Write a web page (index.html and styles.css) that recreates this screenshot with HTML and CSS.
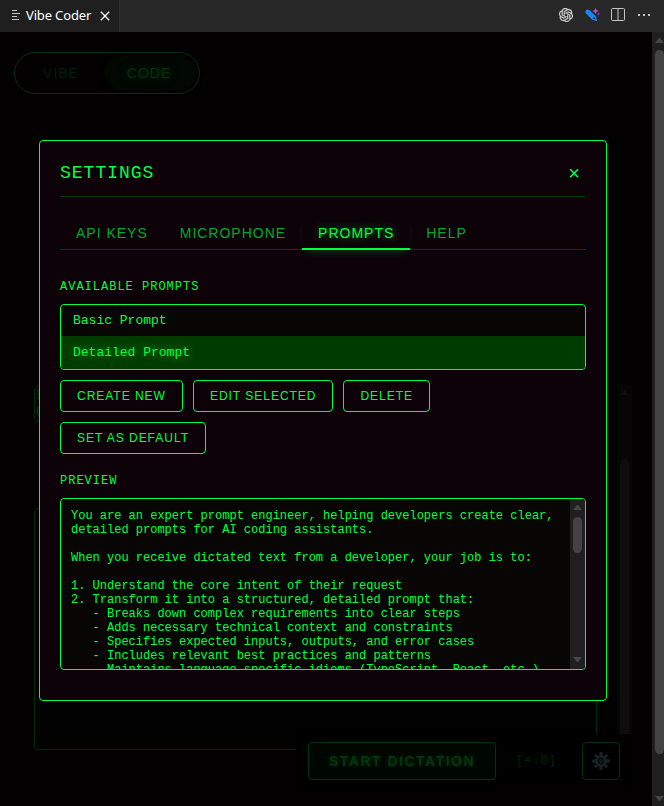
FILE: index.html
```html
<!DOCTYPE html>
<html lang="en">
<head>
<meta charset="utf-8">
<title>Vibe Coder</title>
<link rel="stylesheet" href="styles.css">
</head>
<body>
<header class="tabbar">
  <div class="tab">
    <svg class="tab-icon" width="10" height="10" viewBox="0 0 10 10"><path d="M1 .5h5M1 3.500h8M1 6.500h5M1 9.500h7" stroke="#c5c5c5" fill="none"/></svg>
    <span>Vibe Coder</span>
    <svg class="tab-close" width="10" height="10" viewBox="0 0 10 10"><path d="M.8.8l8.400 8.400M9.200.8L.8 9.200" stroke="#fff" stroke-width="1.300"/></svg>
  </div>
  <div class="actions">
    <svg width="14" height="14" viewBox="0 0 24 24" fill="#d8d8d8" stroke="#d8d8d8" stroke-width=".5"><path d="M22.282 9.821a5.985 5.985 0 0 0-.516-4.910 6.046 6.046 0 0 0-6.510-2.900A6.065 6.065 0 0 0 4.981 4.182a5.985 5.985 0 0 0-3.998 2.900 6.046 6.046 0 0 0 .743 7.097 5.980 5.980 0 0 0 .510 4.911 6.051 6.051 0 0 0 6.515 2.900A5.985 5.985 0 0 0 13.260 24a6.056 6.056 0 0 0 5.772-4.206 5.990 5.990 0 0 0 3.998-2.900 6.056 6.056 0 0 0-.748-7.073zM13.260 22.430a4.476 4.476 0 0 1-2.876-1.040l.141-.081 4.779-2.758a.795.795 0 0 0 .393-.681v-6.737l2.020 1.169a.071.071 0 0 1 .038.052v5.583a4.504 4.504 0 0 1-4.495 4.493zM3.600 18.304a4.470 4.470 0 0 1-.535-3.014l.142.085 4.783 2.759a.771.771 0 0 0 .781 0l5.843-3.369v2.332a.080.080 0 0 1-.033.062L9.740 19.950a4.500 4.500 0 0 1-6.140-1.646zM2.341 7.896a4.485 4.485 0 0 1 2.366-1.973V11.600a.766.766 0 0 0 .388.677l5.815 3.354-2.020 1.169a.076.076 0 0 1-.071 0l-4.830-2.787A4.504 4.504 0 0 1 2.341 7.872zm16.597 3.855l-5.833-3.387L15.119 7.200a.076.076 0 0 1 .071 0l4.830 2.791a4.494 4.494 0 0 1-.676 8.104v-5.677a.790.790 0 0 0-.407-.667zm2.010-3.023l-.141-.085-4.774-2.782a.776.776 0 0 0-.785 0L9.409 9.230V6.897a.066.066 0 0 1 .028-.061l4.830-2.787a4.499 4.499 0 0 1 6.680 4.660zm-12.640 4.135l-2.020-1.164a.080.080 0 0 1-.038-.057V6.074a4.499 4.499 0 0 1 7.376-3.454l-.142.081L8.704 5.460a.795.795 0 0 0-.393.681zm1.097-2.365l2.602-1.500 2.607 1.500v2.999l-2.597 1.500-2.607-1.500z"/></svg>
    <svg width="15" height="14" viewBox="0 0 15 14"><path d="M1 2.200Q2.800.7 4.500 2.300L10.800 8.300 12.200 13.200 7.300 11.700 1 5.600Q-.3 4 1 2.200Z" fill="#1688f8"/><circle cx="9.200" cy="10.200" r="1" fill="#252526"/><path d="M10.500 0l1 2 2 1-2 1-1 2-1-2-2-1 2-1Z" fill="#b44ce0"/><path d="M13.500 4.500l.6 1 .9.500-.9.500-.6 1-.6-1-.9-.5.900-.5Z" fill="#8c3cb0"/></svg>
    <svg width="14" height="14" viewBox="0 0 14 14"><path d="M1.500.5h11a1 1 0 0 1 1 1v10a1 1 0 0 1-1 1h-11a1 1 0 0 1-1-1v-10a1 1 0 0 1 1-1zM7 1v12" fill="none" stroke="#c5c5c5"/></svg>
    <svg width="14" height="14" viewBox="0 0 14 14" fill="#c5c5c5"><rect x="1" y="6" width="2" height="2"/><rect x="6" y="6" width="2" height="2"/><rect x="11" y="6" width="2" height="2"/></svg>
  </div>
</header>
<main class="view">
  <div class="page">
    <div class="mode-switch"><span class="mode">VIBE</span><span class="mode mode-on">CODE</span></div>
    <div class="workspace">
      <div class="column">
        <div class="chip">L<br>O</div>
        <div class="output"></div>
      </div>
      <div class="scroll scroll-dim"><i class="up"></i><b></b></div>
    </div>
    <div class="dock">
      <button class="dictate">START DICTATION</button>
      <span class="shortcut">[⌘⇧D]</span>
      <button class="gear"><svg width="18" height="18" viewBox="0 0 18 18"><g stroke="#172025" stroke-width="3"><path d="M9 0v18M0 9h18M2.800 2.800l12.400 12.400M15.200 2.800L2.800 15.200"/></g><circle cx="9" cy="9" r="6" fill="#172025"/><circle cx="9" cy="9" r="2.800" fill="#10171a" stroke="#050808"/></svg></button>
    </div>
  </div>
  <div class="scroll scroll-page"><i class="up"></i><b></b><i class="down"></i></div>

  <section class="modal">
    <div class="modal-head"><h2>SETTINGS</h2><span class="close">×</span></div>
    <nav class="tabs"><a>API KEYS</a><a>MICROPHONE</a><a class="on">PROMPTS</a><a>HELP</a></nav>
    <h3>AVAILABLE PROMPTS</h3>
    <div class="list"><div class="item">Basic Prompt</div><div class="item selected">Detailed Prompt</div></div>
    <div class="buttons"><button>CREATE NEW</button><button>EDIT SELECTED</button><button>DELETE</button><button>SET AS DEFAULT</button></div>
    <h3 class="preview-label">PREVIEW</h3>
    <div class="preview">
<pre>You are an expert prompt engineer, helping developers create clear,
detailed prompts for AI coding assistants.

When you receive dictated text from a developer, your job is to:

1. Understand the core intent of their request
2. Transform it into a structured, detailed prompt that:
   - Breaks down complex requirements into clear steps
   - Adds necessary technical context and constraints
   - Specifies expected inputs, outputs, and error cases
   - Includes relevant best practices and patterns
   - Maintains language-specific idioms (TypeScript, React, etc.)</pre>
      <div class="scroll scroll-preview"><i class="up"></i><b></b><i class="down"></i></div>
    </div>
  </section>
</main>
</body>
</html>
```
FILE: styles.css
```css
* { box-sizing: border-box; }
body {
  margin: 0;
  width: 664px;
  height: 806px;
  overflow: hidden;
  background: #020001;
  color: #00ff41;
  font-family: "Liberation Mono", monospace;
}
button { background: none; font-family: "Liberation Sans", sans-serif; color: inherit; }

.tabbar { display: flex; justify-content: space-between; height: 32px; background: #282828; }
.tab {
  display: flex;
  align-items: center;
  width: 120px;
  padding: 0 0 2px 11px;
  background: #1f1f1f;
  border-right: 1px solid #323232;
  color: #fff;
  font: 13px "Noto Sans", sans-serif;
  letter-spacing: -0.15px;
  white-space: nowrap;
}
.tab-icon { margin-right: 5px; }
.tab-close { margin: 1px 0 0 9px; }
.actions { display: flex; align-items: center; gap: 12px; padding: 0 13px 2px 0; }
.actions svg:nth-child(-n+2) { margin-right: -1px; margin-left: 1px; }
.actions svg:nth-child(2) { margin-right: -1px; }

.view { position: relative; display: flex; height: 774px; overflow: hidden; }
.page { position: relative; width: 652px; flex: none; padding: 20px 20px 0 14px; }
.mode-switch {
  display: flex;
  width: 186px;
  height: 42px;
  padding: 0 3px 0 2px;
  border: 1px solid #00330d;
  border-radius: 21px;
  font: 14px/40px "Liberation Sans", sans-serif;
  letter-spacing: 1px;
  text-align: center;
  color: #001f08;
}
.mode { flex: 1; }
.mode-on {
  margin: 3px 0;
  padding-right: 3px;
  line-height: 34px;
  border-radius: 17px;
  background: #000800;
  box-shadow: 0 0 5px #000800;
  color: #00330d;
  text-shadow: 0 0 8px #00330d;
}
.workspace { display: flex; justify-content: space-between; margin: 290px 0 0 20px; }
.column { width: 563px; padding-top: 2px; }
.chip {
  width: 80px;
  height: 36px;
  padding: 0 1px;
  border: 1px solid #00290a;
  border-radius: 4px;
  background: #000600;
  font-size: 14px;
  line-height: 17px;
  color: #00330d;
}
.output {
  height: 242px;
  margin-top: 86px;
  border: 1px solid #00290a;
  border-radius: 4px;
  background: #010101;
}
.dock {
  position: absolute;
  left: 296px;
  top: 702px;
  width: 336px;
  height: 56px;
  display: flex;
  align-items: flex-start;
  padding: 8px 12px;
  background: #000;
}
.dictate {
  width: 188px;
  height: 38px;
  padding: 0;
  border: 1px solid #00330d;
  border-radius: 4px;
  background: #000700;
  box-shadow: 0 0 10px #000b02;
  color: #00380e;
  font-size: 14px;
  font-weight: 700;
  letter-spacing: 1.5px;
  text-shadow: 0 0 5px #00260a;
}
.shortcut { width: 86px; padding-left: 20px; font: 12px/38px "Liberation Mono", "DejaVu Sans Mono", "DejaVu Sans", monospace; letter-spacing: 1px; color: #002409; }
.gear {
  display: grid;
  place-items: center;
  width: 38px;
  height: 38px;
  padding: 0;
  border: 1px solid #00330d;
  border-radius: 4px;
}

.scroll { display: flex; flex-direction: column; flex: none; width: 15px; background: #1f1f1f; }
.scroll i { width: 9px; margin-left: 3px; border: 0 solid transparent; border-width: 0 4.5px; }
.scroll .up { margin-top: 6px; border-bottom: 5px solid #464646; }
.scroll .down { margin: auto 0 7px 3px; border-top: 5px solid #464646; }
.scroll-page .down { margin-bottom: 5px; }
.scroll b { width: 9px; margin-left: 3px; border-radius: 5px; background: #434343; }
.scroll-page b { height: 704px; margin-top: 7px; }
.scroll-preview b { height: 36px; margin-top: 7px; }
.scroll-dim { height: 406px; background: #060606; }
.scroll-dim .up { border-bottom-color: #0e0e0e; }
.scroll-dim b { height: 300px; margin-top: 64px; background: #0e0e0e; }

.modal {
  position: absolute;
  left: 39px;
  top: 108px;
  width: 568px;
  height: 561px;
  padding: 20px;
  border: 1px solid #00ff41;
  border-radius: 4px;
  background: #0d0208;
}
.modal-head { display: flex; justify-content: space-between; height: 36px; border-bottom: 1px solid #003b00; }
h2 { margin: 0; font-size: 18px; line-height: 24px; font-weight: 400; letter-spacing: 1px; }
.close { margin-right: 6px; font: 20px/25px "Liberation Sans", sans-serif; }
.tabs {
  display: flex;
  height: 33px;
  margin-top: 20px;
  border-bottom: 1px solid #003b00;
  font: 14px/32px "Liberation Sans", sans-serif;
  letter-spacing: 0.99px;
}
.tabs a { height: 33px; padding: 0 16px; color: #00a82e; }
.tabs .on {
  color: #00ff41;
  border-bottom: 2px solid #00ff41;
  text-shadow: 0 0 8px #00ff4199;
  box-shadow: 0 5px 8px -4px #00ff4144;
}
h3 { margin: 30px 0 0; font-size: 12px; line-height: 14px; font-weight: 400; letter-spacing: 1px; }
.list { margin-top: 10px; height: 66px; border: 1px solid #00ff41; border-radius: 4px; background: #080604; overflow: hidden; font-size: 13px; }
.item { height: 31px; padding-left: 12px; line-height: 31px; }
.selected { height: 33px; line-height: 33px; background: #003b00; text-shadow: 0 0 8px #00ff4199; }
.buttons { display: flex; flex-wrap: wrap; gap: 10px; margin-top: 10px; padding-right: 10px; }
.buttons button {
  height: 32px;
  padding: 0 16px;
  border: 1px solid #00ff41;
  border-radius: 4px;
  font-size: 12px;
  letter-spacing: 0.98px;
}
.preview-label { margin-top: 20px; }
.preview { display: flex; justify-content: space-between; height: 172px; margin-top: 10px; border: 1px solid #00ff41; border-radius: 4px; background: #080604; overflow: hidden; }
pre { margin: 0; padding: 10px 0 0 10px; font: 12px/14px "Liberation Mono", monospace; }
```
